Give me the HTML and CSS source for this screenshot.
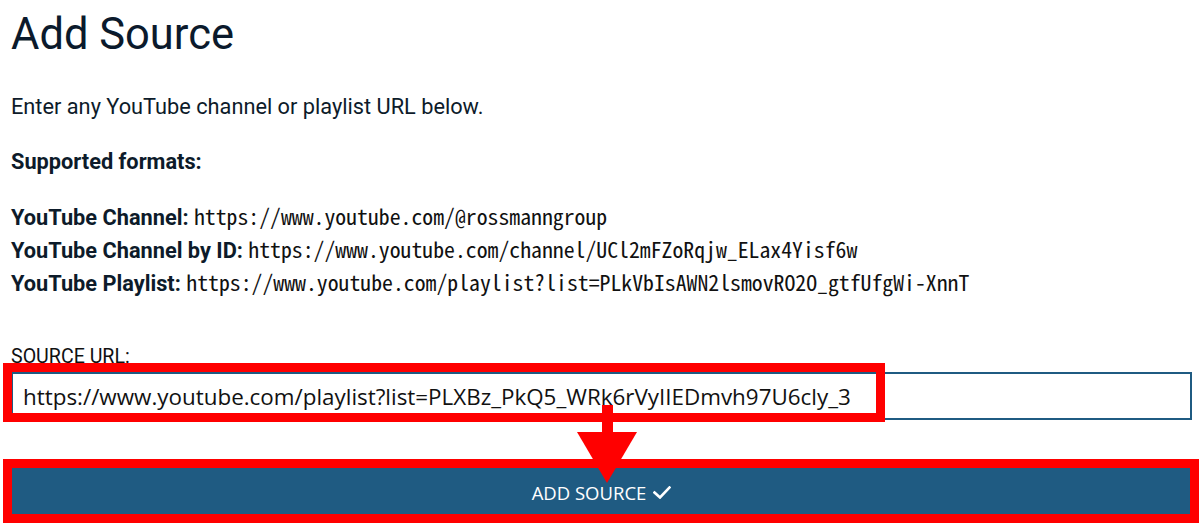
FILE: index.html
```html
<!DOCTYPE html>
<html lang="en">
<head>
<meta charset="utf-8">
<title>Add Source</title>
<link rel="stylesheet" href="styles.css">
</head>
<body>
<main class="page">
  <h1 class="title">Add Source</h1>
  <p class="intro">Enter any YouTube channel or playlist URL below.</p>
  <p class="supported">Supported formats:</p>
  <div class="formats">
    <div class="format"><b>YouTube Channel:</b> <code>https://www.youtube.com/@rossmanngroup</code></div>
    <div class="format"><b>YouTube Channel by ID:</b> <code>https://www.youtube.com/channel/UCl2mFZoRqjw_ELax4Yisf6w</code></div>
    <div class="format"><b>YouTube Playlist:</b> <code>https://www.youtube.com/playlist?list=PLkVbIsAWN2lsmovRO2O_gtfUfgWi-XnnT</code></div>
  </div>
  <form class="form">
    <label class="label" for="src">SOURCE URL:</label>
    <input class="input" id="src" type="text" value="https://www.youtube.com/playlist?list=PLXBz_PkQ5_WRk6rVyIIEDmvh97U6cly_3">
    <button class="button" type="button">ADD SOURCE <svg class="check" width="18" height="13" viewBox="0 0 18 13"><polyline points="1.5,6.5 7,11.5 16.5,1.5" fill="none" stroke="#fff" stroke-width="2.6" stroke-linecap="square"/></svg></button>
  </form>
</main>
<div class="mark mark-input"></div>
<div class="mark mark-button"></div>
<svg class="arrow" width="70" height="80" viewBox="0 0 70 80"><rect x="27" y="0" width="11" height="29" fill="#ff0000"/><polygon points="2,27 62,27 32,78" fill="#ff0000"/></svg>
</body>
</html>
```

FILE: styles.css
```css
html, body {
  margin: 0;
  padding: 0;
  background: #ffffff;
}
body {
  position: relative;
  width: 1200px;
  height: 530px;
  overflow: hidden;
}
.page {
  padding: 9px 8px 0 11px;
  font-family: Roboto, "Liberation Sans", sans-serif;
  color: #0d1b2a;
}
.title {
  margin: 0;
  font-size: 43.5px;
  line-height: 52.8px;
  font-weight: 400;
  color: #0b1a2c;
}
.intro {
  margin: 30px 0 0;
  font-size: 21.75px;
  line-height: 30px;
}
.supported {
  margin: 25px 0 0;
  font-size: 21.75px;
  line-height: 30px;
  font-weight: 700;
}
.formats {
  margin-top: 22px;
  font-size: 21.75px;
  line-height: 33px;
}
.format {
  height: 33px;
  white-space: nowrap;
}
.format b {
  font-weight: 700;
}
.format code {
  font-family: "Noto Sans Mono CJK JP", "DejaVu Sans Mono", monospace;
  font-size: 21.75px;
  line-height: 33px;
  color: #111;
}
.form {
  display: flex;
  flex-direction: column;
  margin-top: 47px;
}
.label {
  font-size: 19.6px;
  line-height: 23.5px;
  color: #111;
}
.input {
  box-sizing: border-box;
  margin-top: 4px;
  width: 100%;
  height: 48px;
  border: 2px solid #1f5b82;
  border-radius: 0;
  padding: 0 10px;
  font-family: "Open Sans", sans-serif;
  font-size: 22.4px;
  color: #111;
  background: #fff;
  outline: none;
}
.button {
  margin: 48px 1px 0;
  height: 47px;
  border: none;
  background: #1f5b82;
  color: #ffffff;
  font-family: "Open Sans", sans-serif;
  font-size: 18.5px;
  display: flex;
  align-items: center;
  justify-content: center;
  gap: 7px;
  padding: 1px 0 0;
}
.check {
  display: block;
}
.mark {
  position: absolute;
  box-sizing: border-box;
  border: 9px solid #ff0000;
}
.mark-input {
  left: 3px;
  top: 363px;
  width: 882px;
  height: 59px;
}
.mark-button {
  left: 3px;
  top: 459px;
  width: 1196px;
  height: 64px;
}
.arrow {
  position: absolute;
  left: 575px;
  top: 405px;
}
```
